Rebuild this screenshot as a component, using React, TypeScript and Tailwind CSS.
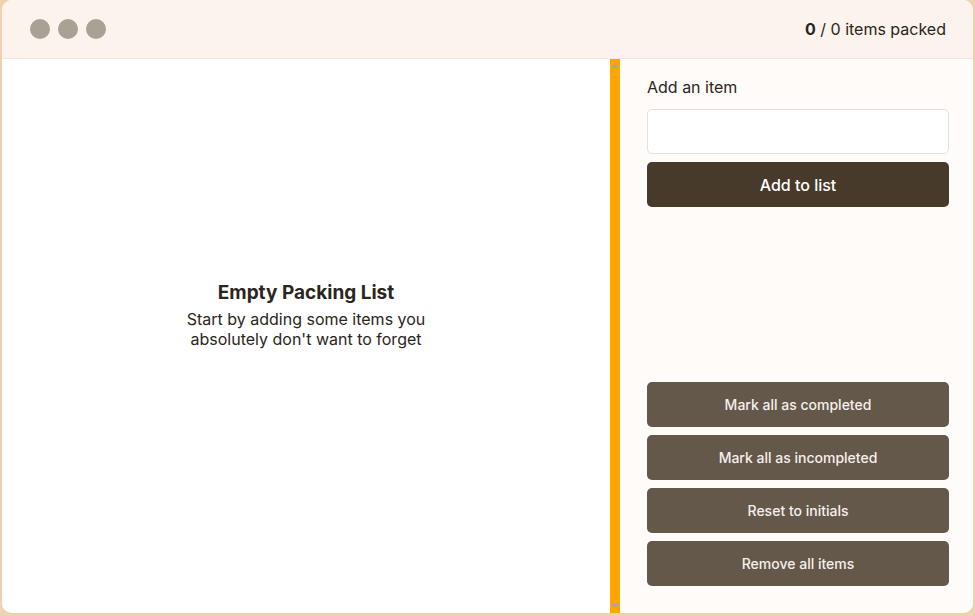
const bulkActions = [
  'Mark all as completed',
  'Mark all as incompleted',
  'Reset to initials',
  'Remove all items',
];

function Header() {
  return (
    <header className="flex h-[59px] items-center justify-between border-b border-[#efe6dc] bg-[#fcf3ec] pl-[28px] pr-[27px]">
      <div className="flex gap-[8px]">
        <span className="h-[20px] w-[20px] rounded-full bg-[#a8a194]" />
        <span className="h-[20px] w-[20px] rounded-full bg-[#a8a194]" />
        <span className="h-[20px] w-[20px] rounded-full bg-[#a8a194]" />
      </div>
      <p className="text-[16px] text-[#2b2520]">
        <b className="font-bold">0</b> / 0 items packed
      </p>
    </header>
  );
}

function Scrollbar() {
  return (
    <div className="flex w-[10px] flex-col items-center justify-between bg-[#ffa500] py-[5px]">
      <span className="h-0 w-0 border-x-[4px] border-b-[4px] border-x-transparent border-b-[#a3a3a3]" />
      <span className="h-0 w-0 border-x-[4px] border-t-[4px] border-x-transparent border-t-[#a3a3a3]" />
    </div>
  );
}

function Sidebar() {
  return (
    <aside className="flex flex-1 flex-col justify-between bg-[#fffbf8] pb-[27px] pl-[27px] pr-[24px] pt-[18px]">
      <form className="flex flex-col" onSubmit={(e) => e.preventDefault()}>
        <label className="text-[16px] leading-[20px] text-[#2b2520]">Add an item</label>
        <input className="mt-[12px] h-[45px] rounded-[5px] border border-[#e3dfdb] bg-white px-3 outline-none" />
        <button className="mt-[8px] h-[45px] rounded-[5px] bg-[#483a2b] text-[16px] font-medium text-white">
          Add to list
        </button>
      </form>
      <div className="flex flex-col gap-[8px]">
        {bulkActions.map((label) => (
          <button
            key={label}
            className="h-[45px] rounded-[5px] bg-[#64584b] text-[14px] font-medium text-[#f5f0eb]"
          >
            {label}
          </button>
        ))}
      </div>
    </aside>
  );
}

export default function App() {
  return (
    <div className="h-[616px] bg-[#ecd2b0] px-[2px] pb-[3px] font-['Inter',sans-serif]">
      <main className="flex h-full flex-col overflow-hidden rounded-[10px] bg-white">
        <Header />
        <div className="flex flex-1">
          {/* Item list (empty) */}
          <section className="flex w-[608px] flex-col items-center justify-center bg-white pb-[42px] text-center text-[#2b2520]">
            <h2 className="text-[19px] font-bold leading-[24px]">Empty Packing List</h2>
            <p className="mt-[4px] w-[260px] text-[16px] leading-[20px]">
              Start by adding some items you absolutely don't want to forget
            </p>
          </section>
          <Scrollbar />
          <Sidebar />
        </div>
      </main>
    </div>
  );
}
